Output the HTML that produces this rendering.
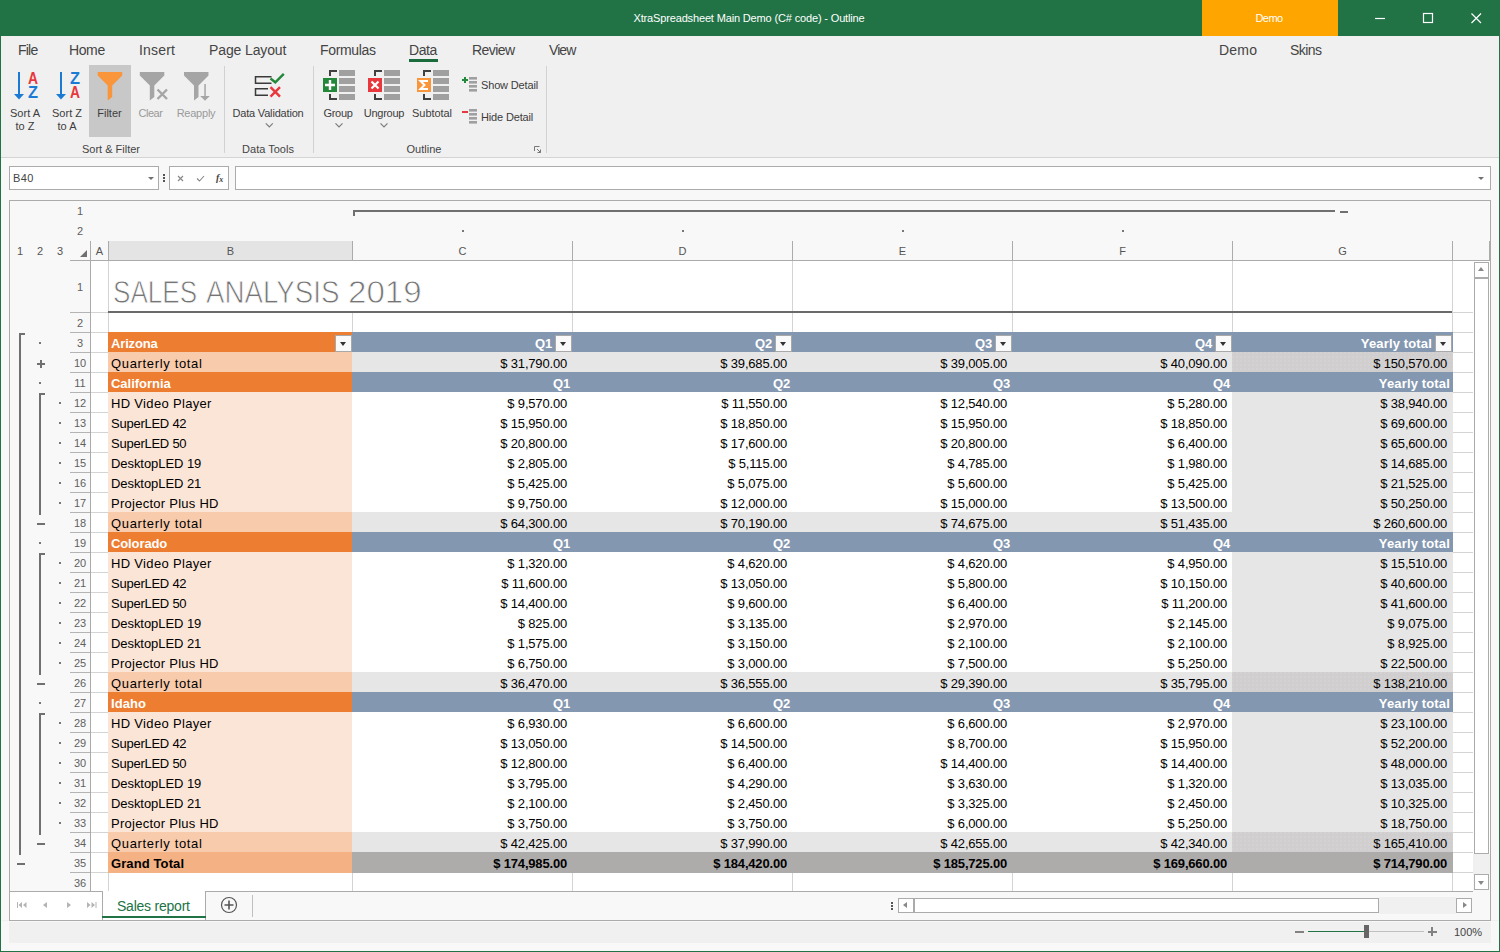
<!DOCTYPE html><html><head><meta charset="utf-8"><title>XtraSpreadsheet</title><style>
*{box-sizing:border-box;margin:0;padding:0}
html,body{width:1500px;height:952px;overflow:hidden}
body{background:#f0f0f0;font-family:"Liberation Sans",sans-serif;font-size:11px;color:#404040;position:relative}
.a{position:absolute}
.t{position:absolute;white-space:nowrap;line-height:1}
.c{text-align:center}
.tab{position:absolute;top:42px;font-size:14px;color:#444;white-space:nowrap;line-height:16px}
.rb{position:absolute;font-size:11px;color:#3c3c3c;text-align:center;white-space:nowrap;line-height:13px}
.dis{color:#9a9a9a}
.gc{position:absolute;top:143px;font-size:11px;color:#444;text-align:center;white-space:nowrap;line-height:13px}
.sep{position:absolute;top:66px;width:1px;height:87px;background:#d2d2d2}
.box{position:absolute;background:#fff;border:1px solid #ababab}
.rh{position:absolute;left:70px;width:20px;font-size:11px;color:#606060;text-align:center;white-space:nowrap}
.ch{position:absolute;top:242px;height:18px;font-size:11px;color:#555;text-align:center;line-height:18px}
.cell{position:absolute;height:19px;line-height:19px;font-size:13px;color:#000;white-space:nowrap;overflow:hidden}
.num{text-align:right;padding-right:5px;letter-spacing:-0.18px}
.lft{padding-left:3px}

.hd{color:#fff;font-weight:bold}
.b{font-weight:bold}
.fb{position:absolute;width:17px;height:17px;background:#f9f9f9;border:1px solid #a8a8a8}
.fb:after{content:"";position:absolute;left:4px;top:6px;border:3.5px solid transparent;border-top:4px solid #333;border-bottom:0}
.hl{position:absolute;height:1px;background:#d4d4d4}
.vl{position:absolute;width:1px;background:#d4d4d4}
.dot{position:absolute;width:2px;height:2px;background:#777}
.ol{position:absolute;background:#707070}
</style></head><body><div class="a" style="left:0;top:0;width:1500px;height:36px;background:#217346"></div>
<div class="t c" style="left:549px;width:400px;top:13px;font-size:11px;color:#fff;letter-spacing:-0.15px">XtraSpreadsheet Main Demo (C# code) - Outline</div>
<div class="a" style="left:1202px;top:0;width:136px;height:36px;background:#ffa500"></div>
<div class="t c" style="left:1203px;width:132px;top:13px;font-size:11px;color:#fff;letter-spacing:-0.6px">Demo</div>
<svg class="a" style="left:1360px;top:0" width="140" height="36" viewBox="0 0 140 36" fill="none" stroke="#fff" stroke-width="1.2"><path d="M15 18.5h10"/><rect x="63.5" y="13.5" width="9" height="9"/><path d="M111.5 13.500l9.500 9.500M121 13.500l-9.500 9.500"/></svg>
<div class="a" style="left:0;top:36px;width:1px;height:916px;background:#217346"></div>
<div class="a" style="left:1499px;top:36px;width:1px;height:916px;background:#217346"></div>
<div class="a" style="left:0;top:951px;width:1500px;height:1px;background:#217346"></div>
<div class="tab" style="left:18px;letter-spacing:-0.788px;">File</div>
<div class="tab" style="left:69px;letter-spacing:-0.386px;">Home</div>
<div class="tab" style="left:139px;letter-spacing:0.197px;">Insert</div>
<div class="tab" style="left:209px;letter-spacing:-0.122px;">Page Layout</div>
<div class="tab" style="left:320px;letter-spacing:-0.337px;">Formulas</div>
<div class="tab" style="left:409px;letter-spacing:-0.426px;">Data</div>
<div class="tab" style="left:472px;letter-spacing:-0.581px;">Review</div>
<div class="tab" style="left:549px;letter-spacing:-0.931px;">View</div>
<div class="tab" style="left:1219px;letter-spacing:0.214px;">Demo</div>
<div class="tab" style="left:1290px;letter-spacing:-0.559px;">Skins</div>
<div class="a" style="left:409px;top:59px;width:29px;height:3px;background:#1b6c3d"></div>
<div class="a" style="left:89px;top:65px;width:42px;height:72px;background:#c8c8c8"></div>
<div class="rb " style="left:-15.0px;width:80px;top:107px;">Sort A<br>to Z</div>
<div class="rb " style="left:27.0px;width:80px;top:107px;">Sort Z<br>to A</div>
<div class="rb " style="left:69.5px;width:80px;top:107px;">Filter</div>
<div class="rb dis" style="left:110.5px;width:80px;top:107px;letter-spacing:-0.5px;">Clear</div>
<div class="rb dis" style="left:156.0px;width:80px;top:107px;letter-spacing:-0.23px;">Reapply</div>
<div class="rb " style="left:228.0px;width:80px;top:107px;letter-spacing:-0.18px;">Data Validation</div>
<div class="rb " style="left:298.0px;width:80px;top:107px;letter-spacing:-0.3px;">Group</div>
<div class="rb " style="left:344.0px;width:80px;top:107px;letter-spacing:-0.25px;">Ungroup</div>
<div class="rb " style="left:392.0px;width:80px;top:107px;letter-spacing:-0.07px;">Subtotal</div>
<div class="rb" style="left:481px;top:79px;text-align:left;letter-spacing:-0.15px">Show Detail</div>
<div class="rb" style="left:481px;top:111px;text-align:left;letter-spacing:-0.15px">Hide Detail</div>
<div class="gc" style="left:61px;width:100px">Sort &amp; Filter</div>
<div class="gc" style="left:218px;width:100px">Data Tools</div>
<div class="gc" style="left:374px;width:100px">Outline</div>
<div class="sep" style="left:224px"></div>
<div class="sep" style="left:313px"></div>
<div class="sep" style="left:546px"></div>
<svg class="a" style="left:0;top:62px" width="560" height="96" viewBox="0 62 560 96"><rect x="18" y="72" width="2" height="23" fill="#1b7ad4"/><path d="M14 94h10l-5 5.500z" fill="#1b7ad4"/><text x="33" y="83.500" text-anchor="middle" font-family="Liberation Sans, sans-serif" font-weight="bold" font-size="16" textLength="10" lengthAdjust="spacingAndGlyphs" fill="#e8383d">A</text><text x="33" y="98" text-anchor="middle" font-family="Liberation Sans, sans-serif" font-weight="bold" font-size="16" textLength="10" lengthAdjust="spacingAndGlyphs" fill="#1b7ad4">Z</text><rect x="60" y="72" width="2" height="23" fill="#1b7ad4"/><path d="M56 94h10l-5 5.500z" fill="#1b7ad4"/><text x="75" y="83.500" text-anchor="middle" font-family="Liberation Sans, sans-serif" font-weight="bold" font-size="16" textLength="10" lengthAdjust="spacingAndGlyphs" fill="#1b7ad4">Z</text><text x="75" y="98" text-anchor="middle" font-family="Liberation Sans, sans-serif" font-weight="bold" font-size="16" textLength="10" lengthAdjust="spacingAndGlyphs" fill="#e8383d">A</text><path d="M97.7 72h24.5v3.500l-10 10v11.500l-4.500 3.500v-15l-10-10z" fill="#f9953a"/><path d="M139.8 72h24.5v3.500l-10 10v11.500l-4.500 3.500v-15l-10-10z" fill="#a5a5a5"/><path d="M157.500 89.500l9.500 9.500M167 89.500l-9.500 9.500" stroke="#a5a5a5" stroke-width="2.400" fill="none"/><path d="M184 72h24.5v3.500l-10 10v11.500l-4.500 3.500v-15l-10-10z" fill="#a5a5a5"/><rect x="204.300" y="84" width="1.500" height="13" fill="#a5a5a5"/><path d="M200.200 96h9.600l-4.800 4.800z" fill="#a5a5a5"/><path d="M271.500 76.700h-16v6.600h16M268 88.700h-12.500v6.600h12.500" stroke="#3a3a3a" stroke-width="1.500" fill="none"/><path d="M270.500 78.500l4.800 3.800l8.500-8.500" stroke="#23883a" stroke-width="2.400" fill="none"/><path d="M270.500 87.200l9.500 9.500M280 87.200l-9.500 9.500" stroke="#e8383d" stroke-width="2.400" fill="none"/><path d="M265.8 123.3l3.500 3.500l3.500-3.500" stroke="#7c7c7c" stroke-width="1.200" fill="none"/><rect x="339" y="70" width="16" height="6" fill="#a0a0a0"/><rect x="339" y="78" width="16" height="6" fill="#a0a0a0"/><rect x="339" y="86" width="16" height="6" fill="#a0a0a0"/><rect x="339" y="94" width="16" height="6" fill="#a0a0a0"/><path d="M337 71h-7v5M337 99h-7v-5" stroke="#404040" stroke-width="2" fill="none"/><rect x="323" y="78" width="14" height="14" fill="#23883a"/><path d="M325 85h10M330 80v10" stroke="#fff" stroke-width="2.400"/><rect x="384" y="70" width="16" height="6" fill="#a0a0a0"/><rect x="384" y="78" width="16" height="6" fill="#a0a0a0"/><rect x="384" y="86" width="16" height="6" fill="#a0a0a0"/><rect x="384" y="94" width="16" height="6" fill="#a0a0a0"/><path d="M382 71h-7v5M382 99h-7v-5" stroke="#404040" stroke-width="2" fill="none"/><rect x="368" y="78" width="14" height="14" fill="#e8383d"/><path d="M371.5 81.500l7 7M378.5 81.500l-7 7" stroke="#fff" stroke-width="2.200"/><rect x="433" y="70" width="16" height="6" fill="#a0a0a0"/><rect x="433" y="78" width="16" height="6" fill="#a0a0a0"/><rect x="433" y="86" width="16" height="6" fill="#a0a0a0"/><rect x="433" y="94" width="16" height="6" fill="#a0a0a0"/><path d="M431 71h-7v5M431 99h-7v-5" stroke="#404040" stroke-width="2" fill="none"/><rect x="417" y="78" width="14" height="14" fill="#f9953a"/><path d="M428 81h-7.500l4 4l-4 4h7.500" stroke="#fff" stroke-width="2" fill="none"/><path d="M335.5 123.3l3.500 3.500l3.500-3.500" stroke="#7c7c7c" stroke-width="1.200" fill="none"/><path d="M380.5 123.3l3.500 3.500l3.500-3.500" stroke="#7c7c7c" stroke-width="1.200" fill="none"/><rect x="469" y="77" width="8" height="2.600" fill="#a0a0a0"/><rect x="469" y="109" width="8" height="2.600" fill="#a0a0a0"/><rect x="469" y="81" width="8" height="2.600" fill="#a0a0a0"/><rect x="469" y="113" width="8" height="2.600" fill="#a0a0a0"/><rect x="469" y="85" width="8" height="2.600" fill="#a0a0a0"/><rect x="469" y="117" width="8" height="2.600" fill="#a0a0a0"/><rect x="469" y="89" width="8" height="2.600" fill="#a0a0a0"/><rect x="469" y="121" width="8" height="2.600" fill="#a0a0a0"/><path d="M462 80h6M465 77v6" stroke="#23883a" stroke-width="2"/><path d="M462 112h6" stroke="#e8383d" stroke-width="2"/><path d="M534.500 151v-4.500h5" stroke="#777" stroke-width="1" fill="none"/><path d="M537 149l3.500 3.500M540.500 149.500v3h-3" stroke="#777" stroke-width="1" fill="none"/></svg>
<div class="a" style="left:1px;top:157px;width:1498px;height:1px;background:#d4d4d4"></div>
<div class="a" style="left:1px;top:158px;width:1498px;height:762px;background:#f8f8f8"></div>
<div class="box" style="left:9px;top:166px;width:150px;height:24px"></div>
<div class="t" style="left:13px;top:173px;font-size:11px;color:#444;letter-spacing:0.4px">B40</div>
<div class="a" style="left:148px;top:177px;border:3px solid transparent;border-top:3px solid #707070;border-bottom:0"></div>
<div class="dot" style="left:163px;top:174px;background:#555"></div><div class="dot" style="left:163px;top:177px;background:#555"></div><div class="dot" style="left:163px;top:180px;background:#555"></div>
<div class="box" style="left:169px;top:166px;width:60px;height:24px"></div>
<svg class="a" style="left:169px;top:166px" width="60" height="24" viewBox="0 0 60 24" fill="none" stroke="#868686" stroke-width="1.1"><path d="M9 10l5 5M14 10l-5 5"/><path d="M28 12.500l2.500 2.500l4.500-5"/></svg>
<div class="t" style="left:216px;top:173px;font-size:10px;color:#444;font-style:italic;font-family:'Liberation Serif',serif;font-weight:bold">f<span style="font-size:8px;position:relative;top:1px">x</span></div>
<div class="box" style="left:235px;top:166px;width:1256px;height:24px"></div>
<div class="a" style="left:1478px;top:177px;border:3px solid transparent;border-top:3px solid #707070;border-bottom:0"></div>
<div class="a" style="left:9px;top:200px;width:1482px;height:721px;border:1px solid #ababab;background:#f8f8f8"></div>
<div class="rh" style="top:205px;line-height:13px">1</div>
<div class="rh" style="top:225px;line-height:13px">2</div>
<div class="t c" style="left:10px;width:20px;top:246px;font-size:11px;color:#555">1</div>
<div class="t c" style="left:30px;width:20px;top:246px;font-size:11px;color:#555">2</div>
<div class="t c" style="left:50px;width:20px;top:246px;font-size:11px;color:#555">3</div>
<div class="ol" style="left:353px;top:210px;width:982px;height:2px"></div>
<div class="ol" style="left:353px;top:210px;width:2px;height:6px"></div>
<div class="ol" style="left:1340px;top:211px;width:8px;height:2px"></div>
<div class="dot" style="left:462px;top:230px"></div>
<div class="dot" style="left:682px;top:230px"></div>
<div class="dot" style="left:902px;top:230px"></div>
<div class="dot" style="left:1122px;top:230px"></div>
<div class="a" style="left:91px;top:261px;width:1399px;height:630px;background:#fff"></div>
<div class="a" style="left:109px;top:241px;width:243px;height:19px;background:#e4e4e4"></div>
<div class="ch" style="left:91px;width:17px">A</div>
<div class="ch" style="left:109px;width:243px">B</div>
<div class="ch" style="left:353px;width:219px">C</div>
<div class="ch" style="left:573px;width:219px">D</div>
<div class="ch" style="left:793px;width:219px">E</div>
<div class="ch" style="left:1013px;width:219px">F</div>
<div class="ch" style="left:1233px;width:219px">G</div>
<div class="a" style="left:70px;top:260px;width:1420px;height:1px;background:#ababab"></div>
<div class="a" style="left:90px;top:241px;width:1px;height:19px;background:#ababab"></div>
<div class="a" style="left:108px;top:241px;width:1px;height:19px;background:#ababab"></div>
<div class="a" style="left:352px;top:241px;width:1px;height:19px;background:#ababab"></div>
<div class="a" style="left:572px;top:241px;width:1px;height:19px;background:#ababab"></div>
<div class="a" style="left:792px;top:241px;width:1px;height:19px;background:#ababab"></div>
<div class="a" style="left:1012px;top:241px;width:1px;height:19px;background:#ababab"></div>
<div class="a" style="left:1232px;top:241px;width:1px;height:19px;background:#ababab"></div>
<div class="a" style="left:1452px;top:241px;width:1px;height:19px;background:#ababab"></div>
<div class="a" style="left:1489px;top:241px;width:1px;height:19px;background:#ababab"></div>
<div class="a" style="left:90px;top:260px;width:1px;height:631px;background:#ababab"></div>
<div class="a" style="left:91px;top:891px;width:1382px;height:1px;background:#ababab"></div>
<svg class="a" style="left:78px;top:248px" width="10" height="10"><path d="M9 2v7H2z" fill="#707070"/></svg>
<div class="vl" style="left:108px;top:261px;height:630px"></div>
<div class="vl" style="left:352px;top:261px;height:630px"></div>
<div class="vl" style="left:572px;top:261px;height:630px"></div>
<div class="vl" style="left:792px;top:261px;height:630px"></div>
<div class="vl" style="left:1012px;top:261px;height:630px"></div>
<div class="vl" style="left:1232px;top:261px;height:630px"></div>
<div class="vl" style="left:1452px;top:261px;height:630px"></div>
<div class="hl" style="left:91px;top:312px;width:1382px"></div>
<div class="hl" style="left:91px;top:332px;width:1382px"></div>
<div class="hl" style="left:91px;top:352px;width:1382px"></div>
<div class="hl" style="left:91px;top:372px;width:1382px"></div>
<div class="hl" style="left:91px;top:392px;width:1382px"></div>
<div class="hl" style="left:91px;top:412px;width:1382px"></div>
<div class="hl" style="left:91px;top:432px;width:1382px"></div>
<div class="hl" style="left:91px;top:452px;width:1382px"></div>
<div class="hl" style="left:91px;top:472px;width:1382px"></div>
<div class="hl" style="left:91px;top:492px;width:1382px"></div>
<div class="hl" style="left:91px;top:512px;width:1382px"></div>
<div class="hl" style="left:91px;top:532px;width:1382px"></div>
<div class="hl" style="left:91px;top:552px;width:1382px"></div>
<div class="hl" style="left:91px;top:572px;width:1382px"></div>
<div class="hl" style="left:91px;top:592px;width:1382px"></div>
<div class="hl" style="left:91px;top:612px;width:1382px"></div>
<div class="hl" style="left:91px;top:632px;width:1382px"></div>
<div class="hl" style="left:91px;top:652px;width:1382px"></div>
<div class="hl" style="left:91px;top:672px;width:1382px"></div>
<div class="hl" style="left:91px;top:692px;width:1382px"></div>
<div class="hl" style="left:91px;top:712px;width:1382px"></div>
<div class="hl" style="left:91px;top:732px;width:1382px"></div>
<div class="hl" style="left:91px;top:752px;width:1382px"></div>
<div class="hl" style="left:91px;top:772px;width:1382px"></div>
<div class="hl" style="left:91px;top:792px;width:1382px"></div>
<div class="hl" style="left:91px;top:812px;width:1382px"></div>
<div class="hl" style="left:91px;top:832px;width:1382px"></div>
<div class="hl" style="left:91px;top:852px;width:1382px"></div>
<div class="hl" style="left:91px;top:872px;width:1382px"></div>
<div class="rh" style="top:262px;height:51px;line-height:51px">1</div>
<div class="a" style="left:70px;top:312px;width:20px;height:1px;background:#b4b4b4"></div>
<div class="rh" style="top:314px;height:19px;line-height:19px">2</div>
<div class="a" style="left:70px;top:332px;width:20px;height:1px;background:#b4b4b4"></div>
<div class="rh" style="top:334px;height:19px;line-height:19px">3</div>
<div class="a" style="left:70px;top:352px;width:20px;height:1px;background:#b4b4b4"></div>
<div class="rh" style="top:354px;height:19px;line-height:19px">10</div>
<div class="a" style="left:70px;top:372px;width:20px;height:1px;background:#b4b4b4"></div>
<div class="rh" style="top:374px;height:19px;line-height:19px">11</div>
<div class="a" style="left:70px;top:392px;width:20px;height:1px;background:#b4b4b4"></div>
<div class="rh" style="top:394px;height:19px;line-height:19px">12</div>
<div class="a" style="left:70px;top:412px;width:20px;height:1px;background:#b4b4b4"></div>
<div class="rh" style="top:414px;height:19px;line-height:19px">13</div>
<div class="a" style="left:70px;top:432px;width:20px;height:1px;background:#b4b4b4"></div>
<div class="rh" style="top:434px;height:19px;line-height:19px">14</div>
<div class="a" style="left:70px;top:452px;width:20px;height:1px;background:#b4b4b4"></div>
<div class="rh" style="top:454px;height:19px;line-height:19px">15</div>
<div class="a" style="left:70px;top:472px;width:20px;height:1px;background:#b4b4b4"></div>
<div class="rh" style="top:474px;height:19px;line-height:19px">16</div>
<div class="a" style="left:70px;top:492px;width:20px;height:1px;background:#b4b4b4"></div>
<div class="rh" style="top:494px;height:19px;line-height:19px">17</div>
<div class="a" style="left:70px;top:512px;width:20px;height:1px;background:#b4b4b4"></div>
<div class="rh" style="top:514px;height:19px;line-height:19px">18</div>
<div class="a" style="left:70px;top:532px;width:20px;height:1px;background:#b4b4b4"></div>
<div class="rh" style="top:534px;height:19px;line-height:19px">19</div>
<div class="a" style="left:70px;top:552px;width:20px;height:1px;background:#b4b4b4"></div>
<div class="rh" style="top:554px;height:19px;line-height:19px">20</div>
<div class="a" style="left:70px;top:572px;width:20px;height:1px;background:#b4b4b4"></div>
<div class="rh" style="top:574px;height:19px;line-height:19px">21</div>
<div class="a" style="left:70px;top:592px;width:20px;height:1px;background:#b4b4b4"></div>
<div class="rh" style="top:594px;height:19px;line-height:19px">22</div>
<div class="a" style="left:70px;top:612px;width:20px;height:1px;background:#b4b4b4"></div>
<div class="rh" style="top:614px;height:19px;line-height:19px">23</div>
<div class="a" style="left:70px;top:632px;width:20px;height:1px;background:#b4b4b4"></div>
<div class="rh" style="top:634px;height:19px;line-height:19px">24</div>
<div class="a" style="left:70px;top:652px;width:20px;height:1px;background:#b4b4b4"></div>
<div class="rh" style="top:654px;height:19px;line-height:19px">25</div>
<div class="a" style="left:70px;top:672px;width:20px;height:1px;background:#b4b4b4"></div>
<div class="rh" style="top:674px;height:19px;line-height:19px">26</div>
<div class="a" style="left:70px;top:692px;width:20px;height:1px;background:#b4b4b4"></div>
<div class="rh" style="top:694px;height:19px;line-height:19px">27</div>
<div class="a" style="left:70px;top:712px;width:20px;height:1px;background:#b4b4b4"></div>
<div class="rh" style="top:714px;height:19px;line-height:19px">28</div>
<div class="a" style="left:70px;top:732px;width:20px;height:1px;background:#b4b4b4"></div>
<div class="rh" style="top:734px;height:19px;line-height:19px">29</div>
<div class="a" style="left:70px;top:752px;width:20px;height:1px;background:#b4b4b4"></div>
<div class="rh" style="top:754px;height:19px;line-height:19px">30</div>
<div class="a" style="left:70px;top:772px;width:20px;height:1px;background:#b4b4b4"></div>
<div class="rh" style="top:774px;height:19px;line-height:19px">31</div>
<div class="a" style="left:70px;top:792px;width:20px;height:1px;background:#b4b4b4"></div>
<div class="rh" style="top:794px;height:19px;line-height:19px">32</div>
<div class="a" style="left:70px;top:812px;width:20px;height:1px;background:#b4b4b4"></div>
<div class="rh" style="top:814px;height:19px;line-height:19px">33</div>
<div class="a" style="left:70px;top:832px;width:20px;height:1px;background:#b4b4b4"></div>
<div class="rh" style="top:834px;height:19px;line-height:19px">34</div>
<div class="a" style="left:70px;top:852px;width:20px;height:1px;background:#b4b4b4"></div>
<div class="rh" style="top:854px;height:19px;line-height:19px">35</div>
<div class="a" style="left:70px;top:872px;width:20px;height:1px;background:#b4b4b4"></div>
<div class="rh" style="top:874px;height:19px;line-height:19px">36</div>
<div class="a" style="left:109px;top:261px;width:1343px;height:50px;background:#fff"></div>
<div class="vl" style="left:572px;top:261px;height:71px"></div>
<div class="vl" style="left:792px;top:261px;height:71px"></div>
<div class="vl" style="left:1012px;top:261px;height:71px"></div>
<div class="vl" style="left:1232px;top:261px;height:71px"></div>
<div class="vl" style="left:1452px;top:261px;height:71px"></div>
<div class="a" style="left:108px;top:311px;width:1344px;height:2px;background:#6a6a6a"></div>
<div class="a" id="title" style="left:0;top:274px;height:36px;font-size:31.5px;color:#757575;-webkit-text-stroke:0.8px #fff;line-height:36px;white-space:nowrap"><span style="position:absolute;left:113.2px;top:0;transform:scaleX(0.828);transform-origin:0 0">SALES</span> <span style="position:absolute;left:206.4px;top:0;transform:scaleX(0.88);transform-origin:0 0">ANALYSIS</span> <span style="position:absolute;left:347.5px;top:0;transform:scaleX(1.05);transform-origin:0 0">2019</span></div>
<div class="a" style="left:108px;top:332px;width:245px;height:21px;background:#ed7d31"></div>
<div class="a" style="left:352px;top:332px;width:1101px;height:21px;background:#8497b0"></div>
<div class="cell hd lft" style="left:108px;top:334px;width:244px;letter-spacing:-0.145px;">Arizona</div>
<div class="cell hd num" style="left:352px;top:334px;width:220px;padding-right:20px;">Q1</div>
<div class="cell hd num" style="left:572px;top:334px;width:220px;padding-right:20px;">Q2</div>
<div class="cell hd num" style="left:792px;top:334px;width:220px;padding-right:20px;">Q3</div>
<div class="cell hd num" style="left:1012px;top:334px;width:220px;padding-right:20px;">Q4</div>
<div class="cell hd num" style="left:1232px;top:334px;width:220px;padding-right:20px;letter-spacing:0.148px;">Yearly total</div>
<div class="fb" style="left:335px;top:335px"></div>
<div class="fb" style="left:555px;top:335px"></div>
<div class="fb" style="left:775px;top:335px"></div>
<div class="fb" style="left:995px;top:335px"></div>
<div class="fb" style="left:1215px;top:335px"></div>
<div class="fb" style="left:1435px;top:335px"></div>
<div class="a" style="left:108px;top:352px;width:245px;height:21px;background:#f8cbad"></div>
<div class="a" style="left:352px;top:352px;width:881px;height:21px;background:#e7e6e6"></div>
<div class="a" style="left:1232px;top:352px;width:221px;height:21px;background:#d0cece radial-gradient(circle at 1px 1px,#d6d4d4 0.6px,transparent 0.8px) 0 0/4px 4px"></div>
<div class="cell lft" style="left:108px;top:354px;width:244px;letter-spacing:0.66px;">Quarterly total</div>
<div class="cell num" style="left:352px;top:354px;width:220px;">$ 31,790.00</div>
<div class="cell num" style="left:572px;top:354px;width:220px;">$ 39,685.00</div>
<div class="cell num" style="left:792px;top:354px;width:220px;">$ 39,005.00</div>
<div class="cell num" style="left:1012px;top:354px;width:220px;">$ 40,090.00</div>
<div class="cell num" style="left:1232px;top:354px;width:220px;">$ 150,570.00</div>
<div class="a" style="left:108px;top:372px;width:245px;height:21px;background:#ed7d31"></div>
<div class="a" style="left:352px;top:372px;width:1101px;height:21px;background:#8497b0"></div>
<div class="cell hd lft" style="left:108px;top:374px;width:244px;letter-spacing:-0.019px;">California</div>
<div class="cell hd num" style="left:352px;top:374px;width:220px;padding-right:2px;">Q1</div>
<div class="cell hd num" style="left:572px;top:374px;width:220px;padding-right:2px;">Q2</div>
<div class="cell hd num" style="left:792px;top:374px;width:220px;padding-right:2px;">Q3</div>
<div class="cell hd num" style="left:1012px;top:374px;width:220px;padding-right:2px;">Q4</div>
<div class="cell hd num" style="left:1232px;top:374px;width:220px;padding-right:2px;letter-spacing:0.148px;">Yearly total</div>
<div class="a" style="left:108px;top:392px;width:245px;height:21px;background:#fbe5d6"></div>
<div class="a" style="left:352px;top:392px;width:881px;height:21px;background:#fff"></div>
<div class="a" style="left:1232px;top:392px;width:221px;height:21px;background:#e7e6e6"></div>
<div class="cell lft" style="left:108px;top:394px;width:244px;letter-spacing:0.323px;">HD Video Player</div>
<div class="cell num" style="left:352px;top:394px;width:220px;">$ 9,570.00</div>
<div class="cell num" style="left:572px;top:394px;width:220px;">$ 11,550.00</div>
<div class="cell num" style="left:792px;top:394px;width:220px;">$ 12,540.00</div>
<div class="cell num" style="left:1012px;top:394px;width:220px;">$ 5,280.00</div>
<div class="cell num" style="left:1232px;top:394px;width:220px;">$ 38,940.00</div>
<div class="a" style="left:108px;top:412px;width:245px;height:21px;background:#fbe5d6"></div>
<div class="a" style="left:352px;top:412px;width:881px;height:21px;background:#fff"></div>
<div class="a" style="left:1232px;top:412px;width:221px;height:21px;background:#e7e6e6"></div>
<div class="cell lft" style="left:108px;top:414px;width:244px;letter-spacing:-0.246px;">SuperLED 42</div>
<div class="cell num" style="left:352px;top:414px;width:220px;">$ 15,950.00</div>
<div class="cell num" style="left:572px;top:414px;width:220px;">$ 18,850.00</div>
<div class="cell num" style="left:792px;top:414px;width:220px;">$ 15,950.00</div>
<div class="cell num" style="left:1012px;top:414px;width:220px;">$ 18,850.00</div>
<div class="cell num" style="left:1232px;top:414px;width:220px;">$ 69,600.00</div>
<div class="a" style="left:108px;top:432px;width:245px;height:21px;background:#fbe5d6"></div>
<div class="a" style="left:352px;top:432px;width:881px;height:21px;background:#fff"></div>
<div class="a" style="left:1232px;top:432px;width:221px;height:21px;background:#e7e6e6"></div>
<div class="cell lft" style="left:108px;top:434px;width:244px;letter-spacing:-0.246px;">SuperLED 50</div>
<div class="cell num" style="left:352px;top:434px;width:220px;">$ 20,800.00</div>
<div class="cell num" style="left:572px;top:434px;width:220px;">$ 17,600.00</div>
<div class="cell num" style="left:792px;top:434px;width:220px;">$ 20,800.00</div>
<div class="cell num" style="left:1012px;top:434px;width:220px;">$ 6,400.00</div>
<div class="cell num" style="left:1232px;top:434px;width:220px;">$ 65,600.00</div>
<div class="a" style="left:108px;top:452px;width:245px;height:21px;background:#fbe5d6"></div>
<div class="a" style="left:352px;top:452px;width:881px;height:21px;background:#fff"></div>
<div class="a" style="left:1232px;top:452px;width:221px;height:21px;background:#e7e6e6"></div>
<div class="cell lft" style="left:108px;top:454px;width:244px;letter-spacing:-0.064px;">DesktopLED 19</div>
<div class="cell num" style="left:352px;top:454px;width:220px;">$ 2,805.00</div>
<div class="cell num" style="left:572px;top:454px;width:220px;">$ 5,115.00</div>
<div class="cell num" style="left:792px;top:454px;width:220px;">$ 4,785.00</div>
<div class="cell num" style="left:1012px;top:454px;width:220px;">$ 1,980.00</div>
<div class="cell num" style="left:1232px;top:454px;width:220px;">$ 14,685.00</div>
<div class="a" style="left:108px;top:472px;width:245px;height:21px;background:#fbe5d6"></div>
<div class="a" style="left:352px;top:472px;width:881px;height:21px;background:#fff"></div>
<div class="a" style="left:1232px;top:472px;width:221px;height:21px;background:#e7e6e6"></div>
<div class="cell lft" style="left:108px;top:474px;width:244px;letter-spacing:-0.064px;">DesktopLED 21</div>
<div class="cell num" style="left:352px;top:474px;width:220px;">$ 5,425.00</div>
<div class="cell num" style="left:572px;top:474px;width:220px;">$ 5,075.00</div>
<div class="cell num" style="left:792px;top:474px;width:220px;">$ 5,600.00</div>
<div class="cell num" style="left:1012px;top:474px;width:220px;">$ 5,425.00</div>
<div class="cell num" style="left:1232px;top:474px;width:220px;">$ 21,525.00</div>
<div class="a" style="left:108px;top:492px;width:245px;height:21px;background:#fbe5d6"></div>
<div class="a" style="left:352px;top:492px;width:881px;height:21px;background:#fff"></div>
<div class="a" style="left:1232px;top:492px;width:221px;height:21px;background:#e7e6e6"></div>
<div class="cell lft" style="left:108px;top:494px;width:244px;letter-spacing:0.262px;">Projector Plus HD</div>
<div class="cell num" style="left:352px;top:494px;width:220px;">$ 9,750.00</div>
<div class="cell num" style="left:572px;top:494px;width:220px;">$ 12,000.00</div>
<div class="cell num" style="left:792px;top:494px;width:220px;">$ 15,000.00</div>
<div class="cell num" style="left:1012px;top:494px;width:220px;">$ 13,500.00</div>
<div class="cell num" style="left:1232px;top:494px;width:220px;">$ 50,250.00</div>
<div class="a" style="left:108px;top:512px;width:245px;height:21px;background:#f8cbad"></div>
<div class="a" style="left:352px;top:512px;width:881px;height:21px;background:#e7e6e6"></div>
<div class="a" style="left:1232px;top:512px;width:221px;height:21px;background:#e7e6e6"></div>
<div class="cell lft" style="left:108px;top:514px;width:244px;letter-spacing:0.66px;">Quarterly total</div>
<div class="cell num" style="left:352px;top:514px;width:220px;">$ 64,300.00</div>
<div class="cell num" style="left:572px;top:514px;width:220px;">$ 70,190.00</div>
<div class="cell num" style="left:792px;top:514px;width:220px;">$ 74,675.00</div>
<div class="cell num" style="left:1012px;top:514px;width:220px;">$ 51,435.00</div>
<div class="cell num" style="left:1232px;top:514px;width:220px;">$ 260,600.00</div>
<div class="a" style="left:108px;top:532px;width:245px;height:21px;background:#ed7d31"></div>
<div class="a" style="left:352px;top:532px;width:1101px;height:21px;background:#8497b0"></div>
<div class="cell hd lft" style="left:108px;top:534px;width:244px;letter-spacing:-0.109px;">Colorado</div>
<div class="cell hd num" style="left:352px;top:534px;width:220px;padding-right:2px;">Q1</div>
<div class="cell hd num" style="left:572px;top:534px;width:220px;padding-right:2px;">Q2</div>
<div class="cell hd num" style="left:792px;top:534px;width:220px;padding-right:2px;">Q3</div>
<div class="cell hd num" style="left:1012px;top:534px;width:220px;padding-right:2px;">Q4</div>
<div class="cell hd num" style="left:1232px;top:534px;width:220px;padding-right:2px;letter-spacing:0.148px;">Yearly total</div>
<div class="a" style="left:108px;top:552px;width:245px;height:21px;background:#fbe5d6"></div>
<div class="a" style="left:352px;top:552px;width:881px;height:21px;background:#fff"></div>
<div class="a" style="left:1232px;top:552px;width:221px;height:21px;background:#e7e6e6"></div>
<div class="cell lft" style="left:108px;top:554px;width:244px;letter-spacing:0.323px;">HD Video Player</div>
<div class="cell num" style="left:352px;top:554px;width:220px;">$ 1,320.00</div>
<div class="cell num" style="left:572px;top:554px;width:220px;">$ 4,620.00</div>
<div class="cell num" style="left:792px;top:554px;width:220px;">$ 4,620.00</div>
<div class="cell num" style="left:1012px;top:554px;width:220px;">$ 4,950.00</div>
<div class="cell num" style="left:1232px;top:554px;width:220px;">$ 15,510.00</div>
<div class="a" style="left:108px;top:572px;width:245px;height:21px;background:#fbe5d6"></div>
<div class="a" style="left:352px;top:572px;width:881px;height:21px;background:#fff"></div>
<div class="a" style="left:1232px;top:572px;width:221px;height:21px;background:#e7e6e6"></div>
<div class="cell lft" style="left:108px;top:574px;width:244px;letter-spacing:-0.246px;">SuperLED 42</div>
<div class="cell num" style="left:352px;top:574px;width:220px;">$ 11,600.00</div>
<div class="cell num" style="left:572px;top:574px;width:220px;">$ 13,050.00</div>
<div class="cell num" style="left:792px;top:574px;width:220px;">$ 5,800.00</div>
<div class="cell num" style="left:1012px;top:574px;width:220px;">$ 10,150.00</div>
<div class="cell num" style="left:1232px;top:574px;width:220px;">$ 40,600.00</div>
<div class="a" style="left:108px;top:592px;width:245px;height:21px;background:#fbe5d6"></div>
<div class="a" style="left:352px;top:592px;width:881px;height:21px;background:#fff"></div>
<div class="a" style="left:1232px;top:592px;width:221px;height:21px;background:#e7e6e6"></div>
<div class="cell lft" style="left:108px;top:594px;width:244px;letter-spacing:-0.246px;">SuperLED 50</div>
<div class="cell num" style="left:352px;top:594px;width:220px;">$ 14,400.00</div>
<div class="cell num" style="left:572px;top:594px;width:220px;">$ 9,600.00</div>
<div class="cell num" style="left:792px;top:594px;width:220px;">$ 6,400.00</div>
<div class="cell num" style="left:1012px;top:594px;width:220px;">$ 11,200.00</div>
<div class="cell num" style="left:1232px;top:594px;width:220px;">$ 41,600.00</div>
<div class="a" style="left:108px;top:612px;width:245px;height:21px;background:#fbe5d6"></div>
<div class="a" style="left:352px;top:612px;width:881px;height:21px;background:#fff"></div>
<div class="a" style="left:1232px;top:612px;width:221px;height:21px;background:#e7e6e6"></div>
<div class="cell lft" style="left:108px;top:614px;width:244px;letter-spacing:-0.064px;">DesktopLED 19</div>
<div class="cell num" style="left:352px;top:614px;width:220px;">$ 825.00</div>
<div class="cell num" style="left:572px;top:614px;width:220px;">$ 3,135.00</div>
<div class="cell num" style="left:792px;top:614px;width:220px;">$ 2,970.00</div>
<div class="cell num" style="left:1012px;top:614px;width:220px;">$ 2,145.00</div>
<div class="cell num" style="left:1232px;top:614px;width:220px;">$ 9,075.00</div>
<div class="a" style="left:108px;top:632px;width:245px;height:21px;background:#fbe5d6"></div>
<div class="a" style="left:352px;top:632px;width:881px;height:21px;background:#fff"></div>
<div class="a" style="left:1232px;top:632px;width:221px;height:21px;background:#e7e6e6"></div>
<div class="cell lft" style="left:108px;top:634px;width:244px;letter-spacing:-0.064px;">DesktopLED 21</div>
<div class="cell num" style="left:352px;top:634px;width:220px;">$ 1,575.00</div>
<div class="cell num" style="left:572px;top:634px;width:220px;">$ 3,150.00</div>
<div class="cell num" style="left:792px;top:634px;width:220px;">$ 2,100.00</div>
<div class="cell num" style="left:1012px;top:634px;width:220px;">$ 2,100.00</div>
<div class="cell num" style="left:1232px;top:634px;width:220px;">$ 8,925.00</div>
<div class="a" style="left:108px;top:652px;width:245px;height:21px;background:#fbe5d6"></div>
<div class="a" style="left:352px;top:652px;width:881px;height:21px;background:#fff"></div>
<div class="a" style="left:1232px;top:652px;width:221px;height:21px;background:#e7e6e6"></div>
<div class="cell lft" style="left:108px;top:654px;width:244px;letter-spacing:0.262px;">Projector Plus HD</div>
<div class="cell num" style="left:352px;top:654px;width:220px;">$ 6,750.00</div>
<div class="cell num" style="left:572px;top:654px;width:220px;">$ 3,000.00</div>
<div class="cell num" style="left:792px;top:654px;width:220px;">$ 7,500.00</div>
<div class="cell num" style="left:1012px;top:654px;width:220px;">$ 5,250.00</div>
<div class="cell num" style="left:1232px;top:654px;width:220px;">$ 22,500.00</div>
<div class="a" style="left:108px;top:672px;width:245px;height:21px;background:#f8cbad"></div>
<div class="a" style="left:352px;top:672px;width:881px;height:21px;background:#e7e6e6"></div>
<div class="a" style="left:1232px;top:672px;width:221px;height:21px;background:#d0cece radial-gradient(circle at 1px 1px,#d6d4d4 0.6px,transparent 0.8px) 0 0/4px 4px"></div>
<div class="cell lft" style="left:108px;top:674px;width:244px;letter-spacing:0.66px;">Quarterly total</div>
<div class="cell num" style="left:352px;top:674px;width:220px;">$ 36,470.00</div>
<div class="cell num" style="left:572px;top:674px;width:220px;">$ 36,555.00</div>
<div class="cell num" style="left:792px;top:674px;width:220px;">$ 29,390.00</div>
<div class="cell num" style="left:1012px;top:674px;width:220px;">$ 35,795.00</div>
<div class="cell num" style="left:1232px;top:674px;width:220px;">$ 138,210.00</div>
<div class="a" style="left:108px;top:692px;width:245px;height:21px;background:#ed7d31"></div>
<div class="a" style="left:352px;top:692px;width:1101px;height:21px;background:#8497b0"></div>
<div class="cell hd lft" style="left:108px;top:694px;width:244px;letter-spacing:0.082px;">Idaho</div>
<div class="cell hd num" style="left:352px;top:694px;width:220px;padding-right:2px;">Q1</div>
<div class="cell hd num" style="left:572px;top:694px;width:220px;padding-right:2px;">Q2</div>
<div class="cell hd num" style="left:792px;top:694px;width:220px;padding-right:2px;">Q3</div>
<div class="cell hd num" style="left:1012px;top:694px;width:220px;padding-right:2px;">Q4</div>
<div class="cell hd num" style="left:1232px;top:694px;width:220px;padding-right:2px;letter-spacing:0.148px;">Yearly total</div>
<div class="a" style="left:108px;top:712px;width:245px;height:21px;background:#fbe5d6"></div>
<div class="a" style="left:352px;top:712px;width:881px;height:21px;background:#fff"></div>
<div class="a" style="left:1232px;top:712px;width:221px;height:21px;background:#e7e6e6"></div>
<div class="cell lft" style="left:108px;top:714px;width:244px;letter-spacing:0.323px;">HD Video Player</div>
<div class="cell num" style="left:352px;top:714px;width:220px;">$ 6,930.00</div>
<div class="cell num" style="left:572px;top:714px;width:220px;">$ 6,600.00</div>
<div class="cell num" style="left:792px;top:714px;width:220px;">$ 6,600.00</div>
<div class="cell num" style="left:1012px;top:714px;width:220px;">$ 2,970.00</div>
<div class="cell num" style="left:1232px;top:714px;width:220px;">$ 23,100.00</div>
<div class="a" style="left:108px;top:732px;width:245px;height:21px;background:#fbe5d6"></div>
<div class="a" style="left:352px;top:732px;width:881px;height:21px;background:#fff"></div>
<div class="a" style="left:1232px;top:732px;width:221px;height:21px;background:#e7e6e6"></div>
<div class="cell lft" style="left:108px;top:734px;width:244px;letter-spacing:-0.246px;">SuperLED 42</div>
<div class="cell num" style="left:352px;top:734px;width:220px;">$ 13,050.00</div>
<div class="cell num" style="left:572px;top:734px;width:220px;">$ 14,500.00</div>
<div class="cell num" style="left:792px;top:734px;width:220px;">$ 8,700.00</div>
<div class="cell num" style="left:1012px;top:734px;width:220px;">$ 15,950.00</div>
<div class="cell num" style="left:1232px;top:734px;width:220px;">$ 52,200.00</div>
<div class="a" style="left:108px;top:752px;width:245px;height:21px;background:#fbe5d6"></div>
<div class="a" style="left:352px;top:752px;width:881px;height:21px;background:#fff"></div>
<div class="a" style="left:1232px;top:752px;width:221px;height:21px;background:#e7e6e6"></div>
<div class="cell lft" style="left:108px;top:754px;width:244px;letter-spacing:-0.246px;">SuperLED 50</div>
<div class="cell num" style="left:352px;top:754px;width:220px;">$ 12,800.00</div>
<div class="cell num" style="left:572px;top:754px;width:220px;">$ 6,400.00</div>
<div class="cell num" style="left:792px;top:754px;width:220px;">$ 14,400.00</div>
<div class="cell num" style="left:1012px;top:754px;width:220px;">$ 14,400.00</div>
<div class="cell num" style="left:1232px;top:754px;width:220px;">$ 48,000.00</div>
<div class="a" style="left:108px;top:772px;width:245px;height:21px;background:#fbe5d6"></div>
<div class="a" style="left:352px;top:772px;width:881px;height:21px;background:#fff"></div>
<div class="a" style="left:1232px;top:772px;width:221px;height:21px;background:#e7e6e6"></div>
<div class="cell lft" style="left:108px;top:774px;width:244px;letter-spacing:-0.064px;">DesktopLED 19</div>
<div class="cell num" style="left:352px;top:774px;width:220px;">$ 3,795.00</div>
<div class="cell num" style="left:572px;top:774px;width:220px;">$ 4,290.00</div>
<div class="cell num" style="left:792px;top:774px;width:220px;">$ 3,630.00</div>
<div class="cell num" style="left:1012px;top:774px;width:220px;">$ 1,320.00</div>
<div class="cell num" style="left:1232px;top:774px;width:220px;">$ 13,035.00</div>
<div class="a" style="left:108px;top:792px;width:245px;height:21px;background:#fbe5d6"></div>
<div class="a" style="left:352px;top:792px;width:881px;height:21px;background:#fff"></div>
<div class="a" style="left:1232px;top:792px;width:221px;height:21px;background:#e7e6e6"></div>
<div class="cell lft" style="left:108px;top:794px;width:244px;letter-spacing:-0.064px;">DesktopLED 21</div>
<div class="cell num" style="left:352px;top:794px;width:220px;">$ 2,100.00</div>
<div class="cell num" style="left:572px;top:794px;width:220px;">$ 2,450.00</div>
<div class="cell num" style="left:792px;top:794px;width:220px;">$ 3,325.00</div>
<div class="cell num" style="left:1012px;top:794px;width:220px;">$ 2,450.00</div>
<div class="cell num" style="left:1232px;top:794px;width:220px;">$ 10,325.00</div>
<div class="a" style="left:108px;top:812px;width:245px;height:21px;background:#fbe5d6"></div>
<div class="a" style="left:352px;top:812px;width:881px;height:21px;background:#fff"></div>
<div class="a" style="left:1232px;top:812px;width:221px;height:21px;background:#e7e6e6"></div>
<div class="cell lft" style="left:108px;top:814px;width:244px;letter-spacing:0.262px;">Projector Plus HD</div>
<div class="cell num" style="left:352px;top:814px;width:220px;">$ 3,750.00</div>
<div class="cell num" style="left:572px;top:814px;width:220px;">$ 3,750.00</div>
<div class="cell num" style="left:792px;top:814px;width:220px;">$ 6,000.00</div>
<div class="cell num" style="left:1012px;top:814px;width:220px;">$ 5,250.00</div>
<div class="cell num" style="left:1232px;top:814px;width:220px;">$ 18,750.00</div>
<div class="a" style="left:108px;top:832px;width:245px;height:21px;background:#f8cbad"></div>
<div class="a" style="left:352px;top:832px;width:881px;height:21px;background:#e7e6e6"></div>
<div class="a" style="left:1232px;top:832px;width:221px;height:21px;background:#d0cece radial-gradient(circle at 1px 1px,#d6d4d4 0.6px,transparent 0.8px) 0 0/4px 4px"></div>
<div class="cell lft" style="left:108px;top:834px;width:244px;letter-spacing:0.66px;">Quarterly total</div>
<div class="cell num" style="left:352px;top:834px;width:220px;">$ 42,425.00</div>
<div class="cell num" style="left:572px;top:834px;width:220px;">$ 37,990.00</div>
<div class="cell num" style="left:792px;top:834px;width:220px;">$ 42,655.00</div>
<div class="cell num" style="left:1012px;top:834px;width:220px;">$ 42,340.00</div>
<div class="cell num" style="left:1232px;top:834px;width:220px;">$ 165,410.00</div>
<div class="a" style="left:108px;top:852px;width:245px;height:21px;background:#f4b183"></div>
<div class="a" style="left:352px;top:852px;width:1101px;height:21px;background:#aeabab"></div>
<div class="cell lft b" style="left:108px;top:854px;width:244px;letter-spacing:0.102px;">Grand Total</div>
<div class="cell num b" style="left:352px;top:854px;width:220px;">$ 174,985.00</div>
<div class="cell num b" style="left:572px;top:854px;width:220px;">$ 184,420.00</div>
<div class="cell num b" style="left:792px;top:854px;width:220px;">$ 185,725.00</div>
<div class="cell num b" style="left:1012px;top:854px;width:220px;">$ 169,660.00</div>
<div class="cell num b" style="left:1232px;top:854px;width:220px;">$ 714,790.00</div>
<div class="ol" style="left:19px;top:333px;width:2px;height:522px"></div>
<div class="ol" style="left:19px;top:333px;width:6px;height:2px"></div>
<div class="ol" style="left:17px;top:863px;width:8px;height:2px"></div>
<div class="dot" style="left:39px;top:342px"></div>
<div class="dot" style="left:39px;top:382px"></div>
<div class="dot" style="left:39px;top:542px"></div>
<div class="dot" style="left:39px;top:702px"></div>
<div class="ol" style="left:37px;top:363px;width:8px;height:2px"></div>
<div class="ol" style="left:40px;top:360px;width:2px;height:8px"></div>
<div class="ol" style="left:39px;top:393px;width:2px;height:122px"></div>
<div class="ol" style="left:39px;top:393px;width:6px;height:2px"></div>
<div class="ol" style="left:37px;top:523px;width:8px;height:2px"></div>
<div class="dot" style="left:59px;top:402px"></div>
<div class="dot" style="left:59px;top:422px"></div>
<div class="dot" style="left:59px;top:442px"></div>
<div class="dot" style="left:59px;top:462px"></div>
<div class="dot" style="left:59px;top:482px"></div>
<div class="dot" style="left:59px;top:502px"></div>
<div class="ol" style="left:39px;top:553px;width:2px;height:122px"></div>
<div class="ol" style="left:39px;top:553px;width:6px;height:2px"></div>
<div class="ol" style="left:37px;top:683px;width:8px;height:2px"></div>
<div class="dot" style="left:59px;top:562px"></div>
<div class="dot" style="left:59px;top:582px"></div>
<div class="dot" style="left:59px;top:602px"></div>
<div class="dot" style="left:59px;top:622px"></div>
<div class="dot" style="left:59px;top:642px"></div>
<div class="dot" style="left:59px;top:662px"></div>
<div class="ol" style="left:39px;top:713px;width:2px;height:122px"></div>
<div class="ol" style="left:39px;top:713px;width:6px;height:2px"></div>
<div class="ol" style="left:37px;top:843px;width:8px;height:2px"></div>
<div class="dot" style="left:59px;top:722px"></div>
<div class="dot" style="left:59px;top:742px"></div>
<div class="dot" style="left:59px;top:762px"></div>
<div class="dot" style="left:59px;top:782px"></div>
<div class="dot" style="left:59px;top:802px"></div>
<div class="dot" style="left:59px;top:822px"></div>
<div class="box" style="left:1474px;top:262px;width:15px;height:16px"></div>
<div class="a" style="left:1478px;top:267px;border:3.5px solid transparent;border-bottom:4px solid #888;border-top:0"></div>
<div class="box" style="left:1474px;top:278px;width:15px;height:576px"></div>
<div class="a" style="left:1473px;top:854px;width:17px;height:20px;background:#f0f0f0"></div>
<div class="a" style="left:1473px;top:874px;width:17px;height:18px;background:#f8f8f8"></div>
<div class="box" style="left:1474px;top:874px;width:15px;height:16px"></div>
<div class="a" style="left:1478px;top:881px;border:3.5px solid transparent;border-top:4px solid #888;border-bottom:0"></div>
<div class="a" style="left:10px;top:891px;width:1463px;height:29px;background:#f8f8f8;border-top:1px solid #ababab"></div>
<div class="a" style="left:10px;top:892px;width:92px;height:28px;background:#fff"></div>
<div class="a" style="left:9px;top:920px;width:1482px;height:1px;background:#ababab"></div>
<div class="a" style="left:1px;top:921px;width:1498px;height:30px;background:#f8f8f8"></div>
<div class="a" style="left:9px;top:922px;width:1482px;height:21px;background:#f0f0f0"></div>
<div class="a" style="left:102px;top:891px;width:104px;height:29px;background:#fff;border-left:1px solid #ababab;border-right:1px solid #ababab"></div>
<div class="a" style="left:102px;top:916px;width:104px;height:2px;background:#217346"></div>
<div class="t" style="left:117px;top:898px;font-size:14px;line-height:16px;color:#217346;letter-spacing:-0.226px;">Sales report</div>
<svg class="a" style="left:10px;top:893px" width="92" height="26" viewBox="10 893 92 26" fill="#b4b4b4"><path d="M17 902h1v6h-1zM22 902v6l-3.500-3zM26.500 902v6l-3.500-3zM47 902v6l-4-3zM67 902v6l4-3zM87 902v6l3.500-3zM91.500 902v6l3.500-3zM95.500 902h1v6h-1z"/></svg>
<svg class="a" style="left:219px;top:895px" width="20" height="20" viewBox="219 895 20 20" fill="none" stroke="#555" stroke-width="1.200"><circle cx="229" cy="905" r="7.500"/><path d="M224.500 905h9M229 900.500v9" stroke-width="1.600"/></svg>
<div class="a" style="left:252px;top:895px;width:1px;height:22px;background:#c0c0c0"></div>
<div class="dot" style="left:891px;top:902px;width:2px;height:2px;background:#555"></div>
<div class="dot" style="left:891px;top:905px;width:2px;height:2px;background:#555"></div>
<div class="dot" style="left:891px;top:908px;width:2px;height:2px;background:#555"></div>
<div class="box" style="left:898px;top:898px;width:16px;height:15px"></div>
<div class="a" style="left:903px;top:902px;border:3.5px solid transparent;border-right:4px solid #888;border-left:0"></div>
<div class="box" style="left:914px;top:898px;width:465px;height:15px"></div>
<div class="a" style="left:1379px;top:897px;width:77px;height:17px;background:#f0f0f0"></div>
<div class="box" style="left:1456px;top:898px;width:16px;height:15px"></div>
<div class="a" style="left:1463px;top:902px;border:3.5px solid transparent;border-left:4px solid #888;border-right:0"></div>
<div class="a" style="left:1295px;top:931px;width:9px;height:2px;background:#828282"></div>
<div class="a" style="left:1308px;top:931px;width:58px;height:1px;background:#217346"></div>
<div class="a" style="left:1366px;top:931px;width:58px;height:1px;background:#c0c0c0"></div>
<div class="a" style="left:1364px;top:925px;width:5px;height:13px;background:#666"></div>
<div class="a" style="left:1428px;top:931px;width:9px;height:2px;background:#828282"></div><div class="a" style="left:1431px;top:927px;width:2px;height:9px;background:#828282"></div>
<div class="t" style="left:1454px;top:927px;font-size:11px;color:#444">100%</div></body></html>
